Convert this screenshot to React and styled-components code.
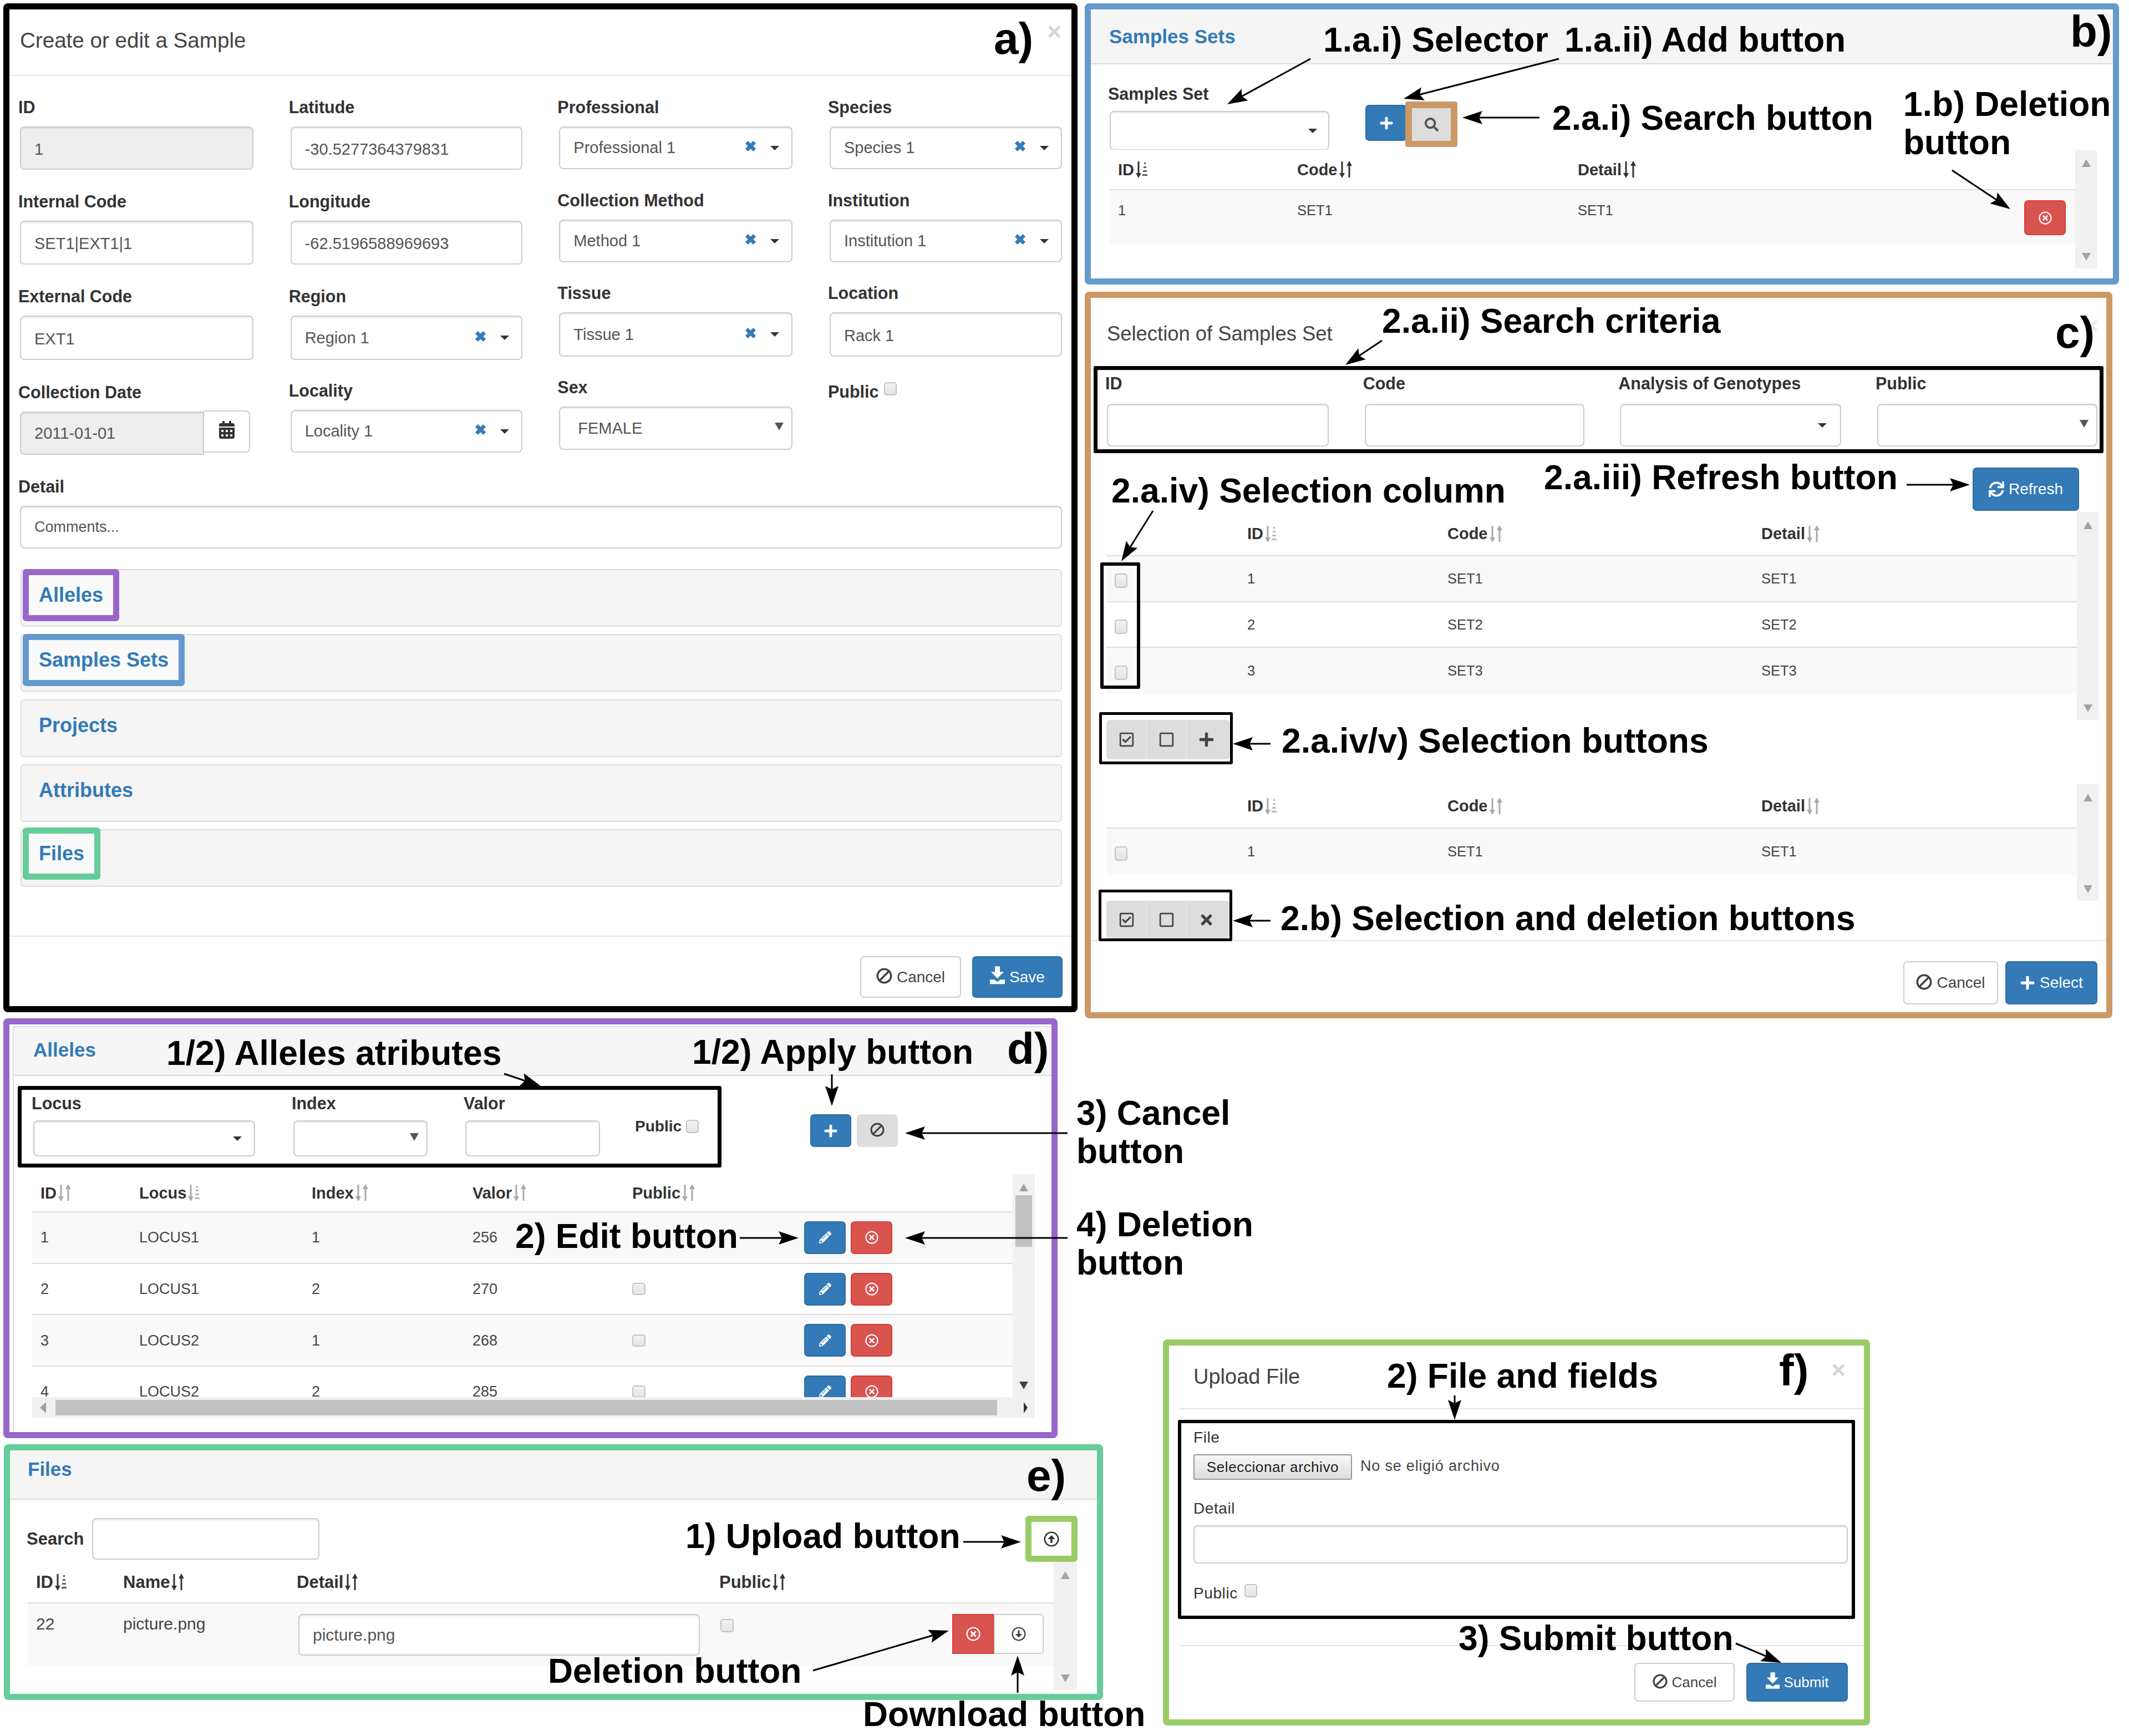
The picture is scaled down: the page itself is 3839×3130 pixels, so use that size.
import React from "react";
import styled, { createGlobalStyle } from "styled-components";
import {
  FaPlus, FaSearch, FaBan, FaCalendarAlt, FaPencilAlt, FaRegCheckSquare, FaRegSquare,
  FaTimes, FaRegTimesCircle, FaSync, FaRegArrowAltCircleUp, FaRegArrowAltCircleDown,
} from "react-icons/fa";

const Global = createGlobalStyle`
  html, body { margin: 0; padding: 0; background: #fff; }
  body { font-family: "Liberation Sans", Arial, sans-serif; color: #333; }
  * { box-sizing: border-box; }
`;

const Canvas = styled.main`
  position: relative;
  width: 3839px;
  height: 3130px;
  background: #fff;
  overflow: hidden;
`;
const Window = styled.section`
  position: absolute;
  left: ${(p) => p.$x}px;
  top: ${(p) => p.$y}px;
  width: ${(p) => p.$w}px;
  height: ${(p) => p.$h}px;
  border: ${(p) => p.$b || 11}px solid ${(p) => p.$c};
  border-radius: 8px;
  background: #fff;
  display: flex;
  flex-direction: column;
  overflow: hidden;
`;
const PanelFrame = styled.div`
  flex: 1;
  min-height: 0;
  margin: 3px 0 0 6px;
  border-left: 2px solid #ddd;
  border-top: 2px solid #ddd;
  display: flex;
  flex-direction: column;
`;
const ModalHead = styled.header`
  flex: none;
  height: ${(p) => p.$h}px;
  margin-left: ${(p) => p.$ml || 0}px;
  padding-left: ${(p) => p.$pl}px;
  border-bottom: 2px solid #e5e5e5;
  display: flex;
  align-items: center;
`;
const ModalTitle = styled.h2`
  margin: 0 0 ${(p) => p.$mb || 0}px;
  font-size: ${(p) => p.$s || 38}px;
  font-weight: 400;
  color: #444;
`;
const Close = styled.span`
  align-self: flex-start;
  margin-left: auto;
  margin-top: ${(p) => p.$mt}px;
  margin-right: ${(p) => p.$mr}px;
  font-size: 44px;
  line-height: 44px;
  font-weight: 700;
  color: ${(p) => p.$c || "#d5d5d5"};
`;
const ModalBody = styled.div`
  padding: 36px 17px 0 19px;
`;
const FieldGrid = styled.div`
  display: grid;
  grid-template-columns: 421px 418px 421px 419px;
  justify-content: space-between;
`;
const FieldColumn = styled.div`
  display: flex;
  flex-direction: column;
`;
const Field = styled.div`
  display: flex;
  flex-direction: column;
  margin-top: ${(p) => p.$mt || 0}px;
  margin-left: ${(p) => p.$ml || 0}px;
  width: ${(p) => (p.$w ? `${p.$w}px` : "auto")};
`;
const Label = styled.label`
  height: 40px;
  line-height: 40px;
  margin-left: ${(p) => p.$dx ?? -3}px;
  margin-bottom: ${(p) => p.$mb ?? 15}px;
  font-size: ${(p) => p.$s || 30.5}px;
  font-weight: ${(p) => p.$weight || 700};
  color: #333;
  letter-spacing: ${(p) => p.$ls || 0}px;
  white-space: nowrap;
`;
const Control = styled.div`
  height: ${(p) => p.$h}px;
  border: 2px solid #ccc;
  border-radius: ${(p) => p.$r || "8px"};
  background: ${(p) => (p.$off ? "#eee" : "#fff")};
  box-shadow: inset 0 2px 2px rgba(0, 0, 0, 0.075);
  display: flex;
  align-items: center;
  padding: ${(p) => p.$pt || 0}px ${(p) => p.$pr ?? 24}px 0 ${(p) => p.$pl ?? 24}px;
  font-size: ${(p) => p.$s || 29}px;
  color: #555;
  width: ${(p) => (p.$w ? `${p.$w}px` : "auto")};
`;
const Grow = styled.span`
  flex: 1;
`;
const ClearSvg = styled.svg`
  flex: none;
  width: 23px;
  height: 23px;
  margin-right: 24px;
  margin-top: -6px;
  color: #337ab7;
`;
const Caret = styled.i`
  width: 0;
  height: 0;
  border-left: 8px solid transparent;
  border-right: 8px solid transparent;
  border-top: 8px solid #333;
`;
const NativeArrow = styled.i`
  width: 0;
  height: 0;
  border-left: 8px solid transparent;
  border-right: 8px solid transparent;
  border-top: 14px solid #555;
  margin-top: -6px;
  margin-right: -8px;
`;
const InputGroup = styled.div`
  display: flex;
  width: 415px;
`;
const DateAddon = styled.span`
  width: 83px;
  height: 76px;
  border: 2px solid #ccc;
  border-left: 0;
  border-radius: 0 8px 8px 0;
  display: flex;
  align-items: center;
  justify-content: center;
  color: #333;
  font-size: 32px;
  padding-bottom: 6px;
  margin-top: -2px;
`;
const Check = styled.span`
  flex: none;
  display: inline-block;
  width: ${(p) => p.$w || 23}px;
  height: ${(p) => p.$h || 24}px;
  border: 2px solid #c4c4c4;
  border-radius: 5px;
  background: linear-gradient(#f2f2f2, #e4e4e4);
  margin-top: ${(p) => p.$mt || 0}px;
  margin-left: ${(p) => p.$ml || 0}px;
`;
const InlineCheck = styled.div`
  display: flex;
  align-items: flex-start;
  margin-top: ${(p) => p.$mt || 0}px;
  margin-left: ${(p) => p.$ml || 0}px;
`;
const Accordion = styled.div`
  display: flex;
  flex-direction: column;
  gap: 13.25px;
  margin-top: 37px;
  margin-left: 1px;
`;
const AccordionPanel = styled.div`
  height: 104px;
  border: 2px solid #ddd;
  border-radius: 6px;
  background: #f5f5f5;
  display: flex;
  align-items: flex-start;
`;
const AccordionTitle = styled.span`
  margin: ${(p) => p.$mt ?? -2}px 0 0 2px;
  height: 94px;
  padding: 0 18px;
  border: 11px solid ${(p) => p.$hl || "transparent"};
  border-radius: 6px;
  background: ${(p) => (p.$hl ? "#fafafa" : "transparent")};
  display: flex;
  align-items: center;
  font-size: 36px;
  font-weight: 700;
  color: #337ab7;
`;
const ModalFoot = styled.footer`
  flex: none;
  margin-top: ${(p) => p.$mt || "auto"};
  margin-left: ${(p) => p.$ml || 0}px;
  height: ${(p) => p.$h}px;
  border-top: 2px solid #e5e5e5;
  padding: ${(p) => p.$pt}px ${(p) => p.$pr}px 0 0;
  display: flex;
  justify-content: flex-end;
  gap: ${(p) => p.$gap}px;
`;
const Button = styled.button`
  flex: none;
  font-family: inherit;
  width: ${(p) => p.$w}px;
  height: ${(p) => p.$h}px;
  margin-top: ${(p) => p.$mt || 0}px;
  border-radius: ${(p) => p.$r || "7px"};
  border: 2px solid ${(p) => ({ blue: "#2e6da4", red: "#d43f3a", white: "#ccc", gray: "#ddd" }[p.$v])};
  background: ${(p) => ({ blue: "#337ab7", red: "#d9534f", white: "#fff", gray: "#ddd" }[p.$v])};
  color: ${(p) => (p.$v === "white" || p.$v === "gray" ? "#444" : "#fff")};
  font-size: ${(p) => p.$s || 28}px;
  display: inline-flex;
  align-items: center;
  justify-content: center;
  gap: 8px;
  padding: 0;
`;
const BanIcon = styled(FaBan)`
  flex: none;
  transform: scaleX(-1);
  width: ${(p) => p.$size || 29}px;
  height: ${(p) => p.$size || 29}px;
  margin-top: -4px;
`;
const SaveSvg = styled.svg`
  flex: none;
  width: ${(p) => p.$size || 27}px;
  height: ${(p) => (p.$size || 27) * 1.2}px;
  margin-top: -6px;
`;
const PanelHead = styled.header`
  flex: none;
  height: ${(p) => p.$h}px;
  margin: ${(p) => p.$m || 0};
  padding: 0 0 ${(p) => p.$pb || 0}px ${(p) => p.$pl}px;
  background: #f5f5f5;
  border-bottom: 2px solid #ddd;
  display: flex;
  align-items: center;
  font-size: 35px;
  font-weight: 700;
  color: #337ab7;
`;
const SelectorRow = styled.div`
  display: flex;
  align-items: flex-start;
  padding: 33px 0 0 34px;
`;
const ButtonCluster = styled.div`
  display: flex;
  align-items: flex-start;
  margin: ${(p) => p.$m};
  gap: ${(p) => p.$gap || 0}px;
`;
const SearchFrame = styled.div`
  width: 94px;
  height: 82px;
  margin-left: -3px;
  border: 12px solid #cc9966;
  border-bottom-width: 11px;
  border-radius: 4px;
  background: #ddd;
  display: flex;
  align-items: center;
  justify-content: center;
  font-size: 25px;
  color: #555;
`;
const TableWrap = styled.div`
  flex: none;
  display: flex;
  align-items: flex-start;
  height: ${(p) => p.$h}px;
  margin: ${(p) => p.$m || 0};
  overflow: hidden;
`;
const TableBody = styled.div`
  flex: 1;
  min-width: 0;
`;
const Row = styled.div`
  display: grid;
  grid-template-columns: ${(p) => p.$cols};
  height: ${(p) => p.$h}px;
  align-items: ${(p) => p.$align || "center"};
  padding-top: ${(p) => p.$pt || 0}px;
  background: ${(p) => (p.$odd ? "#f9f9f9" : "#fff")};
  border-bottom: ${(p) => (p.$line ? "2px solid #ddd" : "0")};
  font-size: ${(p) => p.$s || 25.5}px;
  color: #444;
`;
const Cell = styled.span`
  padding-left: ${(p) => p.$pl ?? 15}px;
  padding-right: ${(p) => p.$pr || 0}px;
  display: flex;
  align-items: ${(p) => p.$items || "center"};
  white-space: nowrap;
  line-height: 36px;
`;
const HeadCell = styled(Cell)`
  font-weight: 700;
  color: #333;
  font-size: ${(p) => p.$s || 29}px;
  gap: 1px;
`;
const SortSvg = styled.svg`
  width: 27px;
  height: 33px;
  color: ${(p) => (p.$tone === "light" ? "#a8a8a8" : "#333")};
  flex: none;
`;
const Track = styled.div`
  flex: none;
  width: ${(p) => p.$w || 39}px;
  height: ${(p) => p.$h}px;
  padding: 17px 0 14px;
  background: #f1f1f1;
  display: flex;
  flex-direction: column;
  align-items: center;
`;
const TriUp = styled.i`
  flex: none;
  border-left: 8px solid transparent;
  border-right: 8px solid transparent;
  border-bottom: 14px solid #a3a3a3;
`;
const TriDown = styled.i`
  flex: none;
  margin-top: auto;
  border-left: 8px solid transparent;
  border-right: 8px solid transparent;
  border-top: 14px solid ${(p) => p.$c || "#a3a3a3"};
`;
const Thumb = styled.b`
  flex: none;
  width: 30px;
  height: 93px;
  margin-top: 7px;
  background: #c1c1c1;
`;
const HScroll = styled.div`
  flex: none;
  height: 38px;
  margin-left: 33px;
  width: 1808px;
  background: #f1f1f1;
  display: flex;
  align-items: center;
  padding: 0 14px;
`;
const HThumb = styled.b`
  flex: 1;
  height: 28px;
  margin: 0 48px 0 17px;
  background: #c1c1c1;
`;
const TriLeft = styled.i`
  border-top: 10px solid transparent;
  border-bottom: 10px solid transparent;
  border-right: 11px solid #a0a0a0;
`;
const TriRight = styled.i`
  border-top: 10px solid transparent;
  border-bottom: 10px solid transparent;
  border-left: 7px solid #333;
  margin-right: -1px;
`;
const BlackFrame = styled.div`
  position: relative;
  z-index: 1;
  flex: none;
  width: ${(p) => (p.$w ? `${p.$w}px` : "auto")};
  height: ${(p) => p.$h}px;
  margin: ${(p) => p.$m || 0};
  padding: ${(p) => p.$p || 0};
  border: ${(p) => p.$b || 7}px solid #000;
  border-radius: 3px;
  background: ${(p) => p.$bg || "#fff"};
`;
const ColumnFrame = styled.div`
  position: absolute;
  z-index: 4;
  left: 1984px;
  top: 1014px;
  width: 72px;
  height: 228px;
  border: 6px solid #000;
  border-radius: 3px;
`;
const CriteriaGrid = styled.div`
  display: grid;
  grid-template-columns: ${(p) => p.$cols};
  justify-content: space-between;
`;
const RefreshRow = styled.div`
  display: flex;
  justify-content: flex-end;
  padding: 26px 49px 0 0;
  height: 104px;
  flex: none;
`;
const BtnGroup = styled.div`
  display: grid;
  grid-template-columns: repeat(3, 72px);
  height: ${(p) => p.$h}px;
  background: #ddd;
  border-radius: 6px;
  overflow: hidden;
`;
const GroupBtn = styled.span`
  display: flex;
  align-items: center;
  justify-content: center;
  font-size: 29px;
  color: #444;
  border-left: 1px solid ${(p) => (p.$first ? "transparent" : "#eaeaea")};
`;
const AttrRow = styled.div`
  display: flex;
  align-items: flex-start;
  flex: none;
`;
const AttrFields = styled.div`
  display: flex;
  align-items: flex-start;
`;
const SearchRow = styled.div`
  flex: none;
  height: 83px;
  margin-top: 29px;
  padding: 0 35px 0 30px;
  display: flex;
  align-items: center;
`;
const SearchLabel = styled.span`
  width: 118px;
  font-size: 31px;
  font-weight: 700;
  color: #333;
`;
const UploadFrame = styled.div`
  margin-left: auto;
  width: 94px;
  height: 83px;
  border: 11px solid #99cc66;
  border-radius: 6px;
  display: flex;
  align-items: center;
  justify-content: center;
  font-size: 28px;
  color: #333;
`;
const FilePick = styled.div`
  display: flex;
  align-items: center;
  height: 46px;
  font-size: 27px;
  letter-spacing: 0.8px;
  color: #444;
  gap: 15px;
`;
const FileButton = styled.span`
  width: 286px;
  height: 46px;
  border: 2px solid #999;
  border-radius: 3px;
  background: linear-gradient(#f6f6f6, #dedede);
  color: #222;
  font-size: 26px;
  letter-spacing: 0.6px;
  display: flex;
  align-items: center;
  justify-content: center;
  white-space: nowrap;
`;
const NoFile = styled.span`
  white-space: nowrap;
  margin-top: -4px;
`;
const FrameStack = styled.div`
  display: flex;
  flex-direction: column;
`;
const Note = styled.span`
  position: absolute;
  z-index: 5;
  left: ${(p) => p.$x}px;
  top: calc(${(p) => p.$y}px - 0.8465em);
  font-size: ${(p) => p.$s || 62.4}px;
  line-height: 1;
  font-weight: 700;
  color: #000;
  white-space: nowrap;
`;
const ArrowLayer = styled.svg`
  position: absolute;
  z-index: 6;
  left: 0;
  top: 0;
  width: 3839px;
  height: 3130px;
  pointer-events: none;
`;

const ClearMark = () => (
  <ClearSvg viewBox="0 0 24 24">
    <path d="M4.5 4.5l15 15M19.5 4.5l-15 15" stroke="currentColor" strokeWidth="7" fill="none" />
  </ClearSvg>
);

const SaveIcon = ({ size }) => (
  <SaveSvg $size={size} viewBox="0 0 27 32">
    <path d="M9 0h9v10h7L13.5 22 2 10h7z" fill="currentColor" />
    <path d="M0 24h8l5.5 4 5.5-4h8v8H0z" fill="currentColor" />
  </SaveSvg>
);

const SortMark = ({ tone, alpha }) => (
  <SortSvg $tone={tone} viewBox="0 0 27 33">
    <path d="M7 2v24" stroke="currentColor" strokeWidth="3" fill="none" />
    <path d="M2 23h10l-5 9z" fill="currentColor" />
    {alpha ? (
      <path d="M17 4h3v3h-3zM16 11h5v3h-5zM15 18h7v3h-7zM14 25h9v3h-9z" fill="currentColor" opacity="0.8" />
    ) : (
      <>
        <path d="M20 31V7" stroke="currentColor" strokeWidth="3" fill="none" />
        <path d="M15 10h10l-5-9z" fill="currentColor" />
      </>
    )}
  </SortSvg>
);

const Arrow = ({ from, to, w = 3 }) => {
  const [x1, y1] = from;
  const [x2, y2] = to;
  const len = Math.hypot(x2 - x1, y2 - y1);
  const ux = (x2 - x1) / len;
  const uy = (y2 - y1) / len;
  const bx = x2 - ux * 36;
  const by = y2 - uy * 36;
  const nx = x2 - ux * 30;
  const ny = y2 - uy * 30;
  const pts = [
    [x2, y2],
    [bx - uy * 12, by + ux * 12],
    [nx, ny],
    [bx + uy * 12, by - ux * 12],
  ].map((p) => p.join(",")).join(" ");
  return (
    <>
      <line x1={x1} y1={y1} x2={nx} y2={ny} stroke="#000" strokeWidth={w} />
      <polygon points={pts} fill="#000" />
    </>
  );
};

const renderControl = (f) => {
  if (f.kind === "chosen")
    return (
      <Control $h={f.h} $pr={22}>
        <Grow>{f.value}</Grow>
        <ClearMark />
        <Caret />
      </Control>
    );
  if (f.kind === "native")
    return (
      <Control $h={f.h} $pl={32} $pr={22}>
        <Grow>{f.value}</Grow>
        <NativeArrow />
      </Control>
    );
  if (f.kind === "date")
    return (
      <InputGroup>
        <Control $h={f.h} $off $r="8px 0 0 8px" $w={332}>{f.value}</Control>
        <DateAddon><FaCalendarAlt /></DateAddon>
      </InputGroup>
    );
  return <Control $h={f.h} $off={f.off} $pt={4}>{f.value}</Control>;
};

const sampleColumns = [
  [
    { label: "ID", value: "1", off: true, h: 78 },
    { label: "Internal Code", value: "SET1|EXT1|1", h: 79, mt: 37 },
    { label: "External Code", value: "EXT1", h: 80, mt: 37 },
    { label: "Collection Date", value: "2011-01-01", kind: "date", h: 78, mt: 38 },
  ],
  [
    { label: "Latitude", value: "-30.5277364379831", h: 78 },
    { label: "Longitude", value: "-62.5196588969693", h: 79, mt: 37 },
    { label: "Region", value: "Region 1", kind: "chosen", h: 80, mt: 37 },
    { label: "Locality", value: "Locality 1", kind: "chosen", h: 77, mt: 35 },
  ],
  [
    { label: "Professional", value: "Professional 1", kind: "chosen", h: 77 },
    { label: "Collection Method", value: "Method 1", kind: "chosen", h: 77, mt: 36 },
    { label: "Tissue", value: "Tissue 1", kind: "chosen", h: 80, mt: 35 },
    { label: "Sex", value: "FEMALE", kind: "native", h: 78, mt: 35 },
  ],
  [
    { label: "Species", value: "Species 1", kind: "chosen", h: 77 },
    { label: "Institution", value: "Institution 1", kind: "chosen", h: 77, mt: 36 },
    { label: "Location", value: "Rack 1", h: 80, mt: 35 },
    { label: "Public", kind: "check", mt: 43 },
  ],
];

const accordions = [
  { t: "Alleles", hl: "#9966cc" },
  { t: "Samples Sets", hl: "#6699cc" },
  { t: "Projects" },
  { t: "Attributes" },
  { t: "Files", hl: "#66cc99", mt: -5 },
];

const SamplePanel = () => (
  <Window $x={6} $y={6} $w={1937} $h={1819} $c="#000">
    <ModalHead $h={120} $pl={19}>
      <ModalTitle $s={38.6} $mb={6}>Create or edit a Sample</ModalTitle>
      <Close $mt={18} $mr={18}>×</Close>
    </ModalHead>
    <ModalBody>
      <FieldGrid>
        {sampleColumns.map((col, i) => (
          <FieldColumn key={i}>
            {col.map((f) =>
              f.kind === "check" ? (
                <InlineCheck key={f.label} $mt={f.mt}>
                  <Label $mb={0}>{f.label}</Label>
                  <Check $ml={10} $mt={3} />
                </InlineCheck>
              ) : (
                <Field key={f.label} $mt={f.mt}>
                  <Label>{f.label}</Label>
                  {renderControl(f)}
                </Field>
              )
            )}
          </FieldColumn>
        ))}
      </FieldGrid>
      <Field $mt={37}>
        <Label>Detail</Label>
        <Control $h={77} $s={27}>Comments...</Control>
      </Field>
      <Accordion>
        {accordions.map((a) => (
          <AccordionPanel key={a.t}>
            <AccordionTitle $hl={a.hl} $mt={a.mt}>{a.t}</AccordionTitle>
          </AccordionPanel>
        ))}
      </Accordion>
    </ModalBody>
    <ModalFoot $h={127} $pt={35} $pr={16} $gap={20}>
      <Button $v="white" $w={182} $h={75}><BanIcon />Cancel</Button>
      <Button $v="blue" $w={163} $h={75}><SaveIcon />Save</Button>
    </ModalFoot>
  </Window>
);

const SamplesSetPanel = () => (
  <Window $x={1956} $y={6} $w={1865} $h={507} $c="#6699cc">
    <PanelHead $h={95} $m="4px 0 0" $pl={33} $pb={4}>Samples Sets</PanelHead>
    <SelectorRow>
      <Field $w={396}>
        <Label $mb={11}>Samples Set</Label>
        <Control $h={71} $pr={20}><Grow /><Caret /></Control>
      </Field>
      <ButtonCluster $m="34px 0 0 65px">
        <Button $v="blue" $w={75} $h={65} $mt={6} $s={26}><FaPlus /></Button>
        <SearchFrame><FaSearch /></SearchFrame>
      </ButtonCluster>
    </SelectorRow>
    <TableWrap $h={214} $m="-1px 29px 0 34px">
      <TableBody>
        <Row $cols="323px 506px 1fr" $h={73} $line>
          <HeadCell>ID<SortMark alpha /></HeadCell>
          <HeadCell>Code<SortMark /></HeadCell>
          <HeadCell>Detail<SortMark /></HeadCell>
        </Row>
        <Row $cols="323px 506px 1fr 92px" $h={98} $odd $align="start" $pt={18}>
          <Cell>1</Cell>
          <Cell>SET1</Cell>
          <Cell>SET1</Cell>
          <Button $v="red" $w={75} $h={63} $s={24}><FaRegTimesCircle /></Button>
        </Row>
      </TableBody>
      <Track $h={214}><TriUp /><TriDown /></Track>
    </TableWrap>
  </Window>
);

const pickCols = "239px 361px 566px 1fr";
const PickTable = ({ rows, h, m }) => (
  <TableWrap $h={h} $m={m}>
    <TableBody>
      <Row $cols={pickCols} $h={80} $line>
        <HeadCell />
        <HeadCell>ID<SortMark tone="light" alpha /></HeadCell>
        <HeadCell>Code<SortMark tone="light" /></HeadCell>
        <HeadCell>Detail<SortMark tone="light" /></HeadCell>
      </Row>
      {rows.map((n, i) => (
        <Row key={n} $cols={pickCols} $h={82.5} $odd={i % 2 === 0} $line={i < rows.length - 1}>
          <Cell><Check $w={23} $h={26} $mt={8} /></Cell>
          <Cell>{n}</Cell>
          <Cell>SET{n}</Cell>
          <Cell>SET{n}</Cell>
        </Row>
      ))}
    </TableBody>
    <Track $h={h}><TriUp /><TriDown /></Track>
  </TableWrap>
);

const SelectionGroup = ({ last, h, m, p }) => (
  <BlackFrame $w={241} $h={h} $b={5} $m={m} $p={p}>
    <BtnGroup $h={h === 94 ? 71 : 68}>
      <GroupBtn $first><FaRegCheckSquare /></GroupBtn>
      <GroupBtn><FaRegSquare /></GroupBtn>
      <GroupBtn>{last}</GroupBtn>
    </BtnGroup>
  </BlackFrame>
);

const SelectionPanel = () => (
  <Window $x={1956} $y={526} $w={1853} $h={1310} $c="#cc9966">
    <ModalHead $h={131} $pl={29}>
      <ModalTitle $s={36.4}>Selection of Samples Set</ModalTitle>
      <Close $mt={28} $mr={14} $c="#e8e8e8">×</Close>
    </ModalHead>
    <BlackFrame $h={157} $m="-8px 5px 0 5px" $b={7} $p="4px 4px 0 17px" $bg="transparent">
      <CriteriaGrid $cols="400px 396px 399px 397px">
        <Field><Label $mb={17}>ID</Label><Control $h={77} /></Field>
        <Field><Label $mb={17}>Code</Label><Control $h={77} /></Field>
        <Field>
          <Label $mb={17}>Analysis of Genotypes</Label>
          <Control $h={77} $pr={24}><Grow /><Caret /></Control>
        </Field>
        <Field>
          <Label $mb={17}>Public</Label>
          <Control $h={77} $pr={22}><Grow /><NativeArrow /></Control>
        </Field>
      </CriteriaGrid>
    </BlackFrame>
    <RefreshRow>
      <Button $v="blue" $w={192} $h={78}><FaSync />Refresh</Button>
    </RefreshRow>
    <PickTable rows={[1, 2, 3]} h={375} m="2px 14px 0 28px" />
    <SelectionGroup last={<FaPlus />} h={94} m="-14px 0 0 15px" p="9px 0 0 8px" />
    <PickTable rows={[1]} h={210} m="36px 14px 0 28px" />
    <SelectionGroup last={<FaTimes />} h={93} m="-20px 0 0 14px" p="15px 0 0 9px" />
    <ModalFoot $mt="-2px" $ml={2} $h={130} $pt={36} $pr={16} $gap={13}>
      <Button $v="white" $w={171} $h={78}><BanIcon />Cancel</Button>
      <Button $v="blue" $w={166} $h={78}><FaPlus />Select</Button>
    </ModalFoot>
  </Window>
);

const alleleCols = "178px 311px 290px 288px 325px 160px";
const alleles = [
  ["1", "LOCUS1", "1", "256", false],
  ["2", "LOCUS1", "2", "270", true],
  ["3", "LOCUS2", "1", "268", true],
  ["4", "LOCUS2", "2", "285", true],
];
const AllelesPanel = () => (
  <Window $x={6} $y={1836} $w={1901} $h={757} $c="#9966cc">
    <PanelFrame>
      <PanelHead $h={88} $pl={35} $pb={4}>Alleles</PanelHead>
      <AttrRow>
        <BlackFrame $w={1269} $h={147} $m="18px 0 0 7px" $p="4px 0 0 21px">
          <AttrFields>
            <Field $w={400}><Label $mb={11}>Locus</Label><Control $h={65} $pr={22}><Grow /><Caret /></Control></Field>
            <Field $w={242} $ml={69}><Label $mb={11}>Index</Label><Control $h={65} $pr={22}><Grow /><NativeArrow /></Control></Field>
            <Field $w={243} $ml={68}><Label $mb={11}>Valor</Label><Control $h={65} /></Field>
            <InlineCheck $mt={42} $ml={66}>
              <Label $mb={0} $s={28}>Public</Label>
              <Check $ml={8} $h={24} $mt={8} />
            </InlineCheck>
          </AttrFields>
        </BlackFrame>
        <ButtonCluster $m="69px 0 0 160px" $gap={10}>
          <Button $v="blue" $w={74} $h={59} $s={26}><FaPlus /></Button>
          <Button $v="gray" $w={74} $h={59}><BanIcon $size={26} /></Button>
        </ButtonCluster>
      </AttrRow>
      <TableWrap $h={402} $m="12px 30px 0 33px">
        <TableBody>
          <Row $cols={alleleCols} $h={69} $line>
            <HeadCell>ID<SortMark tone="light" /></HeadCell>
            <HeadCell>Locus<SortMark tone="light" alpha /></HeadCell>
            <HeadCell>Index<SortMark tone="light" /></HeadCell>
            <HeadCell>Valor<SortMark tone="light" /></HeadCell>
            <HeadCell>Public<SortMark tone="light" /></HeadCell>
          </Row>
          {alleles.map(([id, locus, idx, val, cb], i) => (
            <Row key={id} $cols={alleleCols} $h={92.7} $odd={i % 2 === 0} $line $s={27}>
              <Cell>{id}</Cell>
              <Cell>{locus}</Cell>
              <Cell>{idx}</Cell>
              <Cell>{val}</Cell>
              <Cell>{cb && <Check $w={24} $h={22} />}</Cell>
              <ButtonCluster $m="0" $gap={9}>
                <Button $v="blue" $w={75} $h={59} $s={22}><FaPencilAlt /></Button>
                <Button $v="red" $w={75} $h={59} $s={24}><FaRegTimesCircle /></Button>
              </ButtonCluster>
            </Row>
          ))}
        </TableBody>
        <Track $h={402} $w={40}>
          <TriUp />
          <Thumb />
          <TriDown $c="#444" />
        </Track>
      </TableWrap>
      <HScroll>
        <TriLeft />
        <HThumb />
        <TriRight />
      </HScroll>
    </PanelFrame>
  </Window>
);

const fileCols = "157px 313px 762px 1fr";
const FilesPanel = () => (
  <Window $x={7} $y={2604} $w={1982} $h={461} $c="#66cc99">
    <PanelHead $h={89} $pl={32} $pb={20}>Files</PanelHead>
    <SearchRow>
      <SearchLabel>Search</SearchLabel>
      <Control $h={75} $w={410} />
      <UploadFrame><FaRegArrowAltCircleUp /></UploadFrame>
    </SearchRow>
    <TableWrap $h={231} $m="0 36px 0 32px">
      <TableBody>
        <Row $cols={fileCols} $h={75} $line>
          <HeadCell $s={31}>ID<SortMark alpha /></HeadCell>
          <HeadCell $s={31}>Name<SortMark /></HeadCell>
          <HeadCell $s={31}>Detail<SortMark /></HeadCell>
          <HeadCell $s={31}>Public<SortMark /></HeadCell>
        </Row>
        <Row $cols={fileCols} $h={112} $odd $align="start" $pt={19} $s={30}>
          <Cell>22</Cell>
          <Cell>picture.png</Cell>
          <Cell $pl={18}>
            <Control $h={75} $w={724} $s={30}>picture.png</Control>
          </Cell>
          <Cell $pl={17} $pr={18} $items="flex-start">
            <Check $w={24} $h={24} $mt={9} />
            <Grow />
            <Button $v="red" $w={75} $h={72} $r="0" $s={26}><FaRegTimesCircle /></Button>
            <Button $v="white" $w={90} $h={72} $r="0 6px 6px 0" $s={26}><FaRegArrowAltCircleDown /></Button>
          </Cell>
        </Row>
      </TableBody>
      <Track $h={231} $w={42}><TriUp /><TriDown /></Track>
    </TableWrap>
  </Window>
);

const UploadPanel = () => (
  <Window $x={2097} $y={2415} $w={1275} $h={696} $c="#99cc66">
    <ModalHead $h={115} $pl={26} $ml={18}>
      <ModalTitle>Upload File</ModalTitle>
      <Close $mt={22} $mr={33}>×</Close>
    </ModalHead>
    <FrameStack>
      <BlackFrame $h={359} $b={6} $m="19px 16px 0 16px" $p="6px 7px 0 22px">
        <Field>
          <Label $dx={0} $mb={10} $s={28} $weight={400} $ls={0.6}>File</Label>
          <FilePick>
            <FileButton>Seleccionar archivo</FileButton>
            <NoFile>No se eligió archivo</NoFile>
          </FilePick>
        </Field>
        <Field $mt={32}>
          <Label $dx={0} $mb={10} $s={28} $weight={400} $ls={0.6}>Detail</Label>
          <Control $h={69} />
        </Field>
        <InlineCheck $mt={34}>
          <Label $dx={0} $mb={0} $s={28} $weight={400} $ls={0.6}>Public</Label>
          <Check $ml={12} $h={24} $mt={3} />
        </InlineCheck>
      </BlackFrame>
    </FrameStack>
    <ModalFoot $mt="47px" $ml={18} $h={120} $pt={30} $pr={29} $gap={21}>
      <Button $v="white" $w={181} $h={70} $s={26}><BanIcon $size={27} />Cancel</Button>
      <Button $v="blue" $w={183} $h={70} $s={26}><SaveIcon size={25} />Submit</Button>
    </ModalFoot>
  </Window>
);

const notes = [
  { x: 1792, y: 98, t: "a)", s: 80 },
  { x: 3733, y: 85, t: "b)", s: 80 },
  { x: 3706, y: 628, t: "c)", s: 80 },
  { x: 1816, y: 1919, t: "d)", s: 80 },
  { x: 1851, y: 2689, t: "e)", s: 80 },
  { x: 3208, y: 2499, t: "f)", s: 80 },
  { x: 2386, y: 94, t: "1.a.i) Selector" },
  { x: 2821, y: 94, t: "1.a.ii) Add button" },
  { x: 2799, y: 235, t: "2.a.i) Search button" },
  { x: 3432, y: 210, t: "1.b) Deletion" },
  { x: 3432, y: 279, t: "button" },
  { x: 2492, y: 601, t: "2.a.ii) Search criteria" },
  { x: 2004, y: 907, t: "2.a.iv) Selection column" },
  { x: 2784, y: 883, t: "2.a.iii) Refresh button" },
  { x: 2311, y: 1358, t: "2.a.iv/v) Selection buttons" },
  { x: 2309, y: 1678, t: "2.b) Selection and deletion buttons" },
  { x: 300, y: 1921, t: "1/2) Alleles atributes" },
  { x: 1248, y: 1919, t: "1/2) Apply button" },
  { x: 1941, y: 2029, t: "3) Cancel" },
  { x: 1941, y: 2098, t: "button" },
  { x: 929, y: 2251, t: "2) Edit button" },
  { x: 1941, y: 2230, t: "4) Deletion" },
  { x: 1941, y: 2299, t: "button" },
  { x: 1236, y: 2792, t: "1) Upload button" },
  { x: 988, y: 3035, t: "Deletion button" },
  { x: 1556, y: 3113, t: "Download button" },
  { x: 2501, y: 2503, t: "2) File and fields" },
  { x: 2630, y: 2976, t: "3) Submit button" },
];

const arrows = [
  [[2363, 106], [2213, 188]],
  [[2811, 106], [2531, 178]],
  [[2776, 212], [2637, 212]],
  [[3520, 307], [3625, 377]],
  [[2492, 614], [2426, 658]],
  [[3438, 874], [3552, 874]],
  [[2079, 921], [2022, 1012]],
  [[2291, 1341], [2223, 1341]],
  [[2291, 1660], [2223, 1660]],
  [[909, 1936], [975, 1958]],
  [[1500, 1937], [1500, 1994]],
  [[1925, 2043], [1632, 2043]],
  [[1334, 2232], [1440, 2232]],
  [[1925, 2232], [1632, 2232]],
  [[1737, 2780], [1841, 2780]],
  [[1466, 3012], [1711, 2940]],
  [[1835, 3052], [1835, 2985]],
  [[2623, 2516], [2623, 2560]],
  [[3130, 2963], [3212, 2998]],
];

export default function App() {
  return (
    <>
      <Global />
      <Canvas>
        <SamplePanel />
        <SamplesSetPanel />
        <SelectionPanel />
        <AllelesPanel />
        <FilesPanel />
        <UploadPanel />
        {notes.map((n) => (
          <Note key={`${n.x}-${n.y}`} $x={n.x} $y={n.y} $s={n.s}>{n.t}</Note>
        ))}
        <ColumnFrame />
        <ArrowLayer viewBox="0 0 3839 3130">
          {arrows.map(([a, b], i) => <Arrow key={i} from={a} to={b} />)}
        </ArrowLayer>
      </Canvas>
    </>
  );
}
